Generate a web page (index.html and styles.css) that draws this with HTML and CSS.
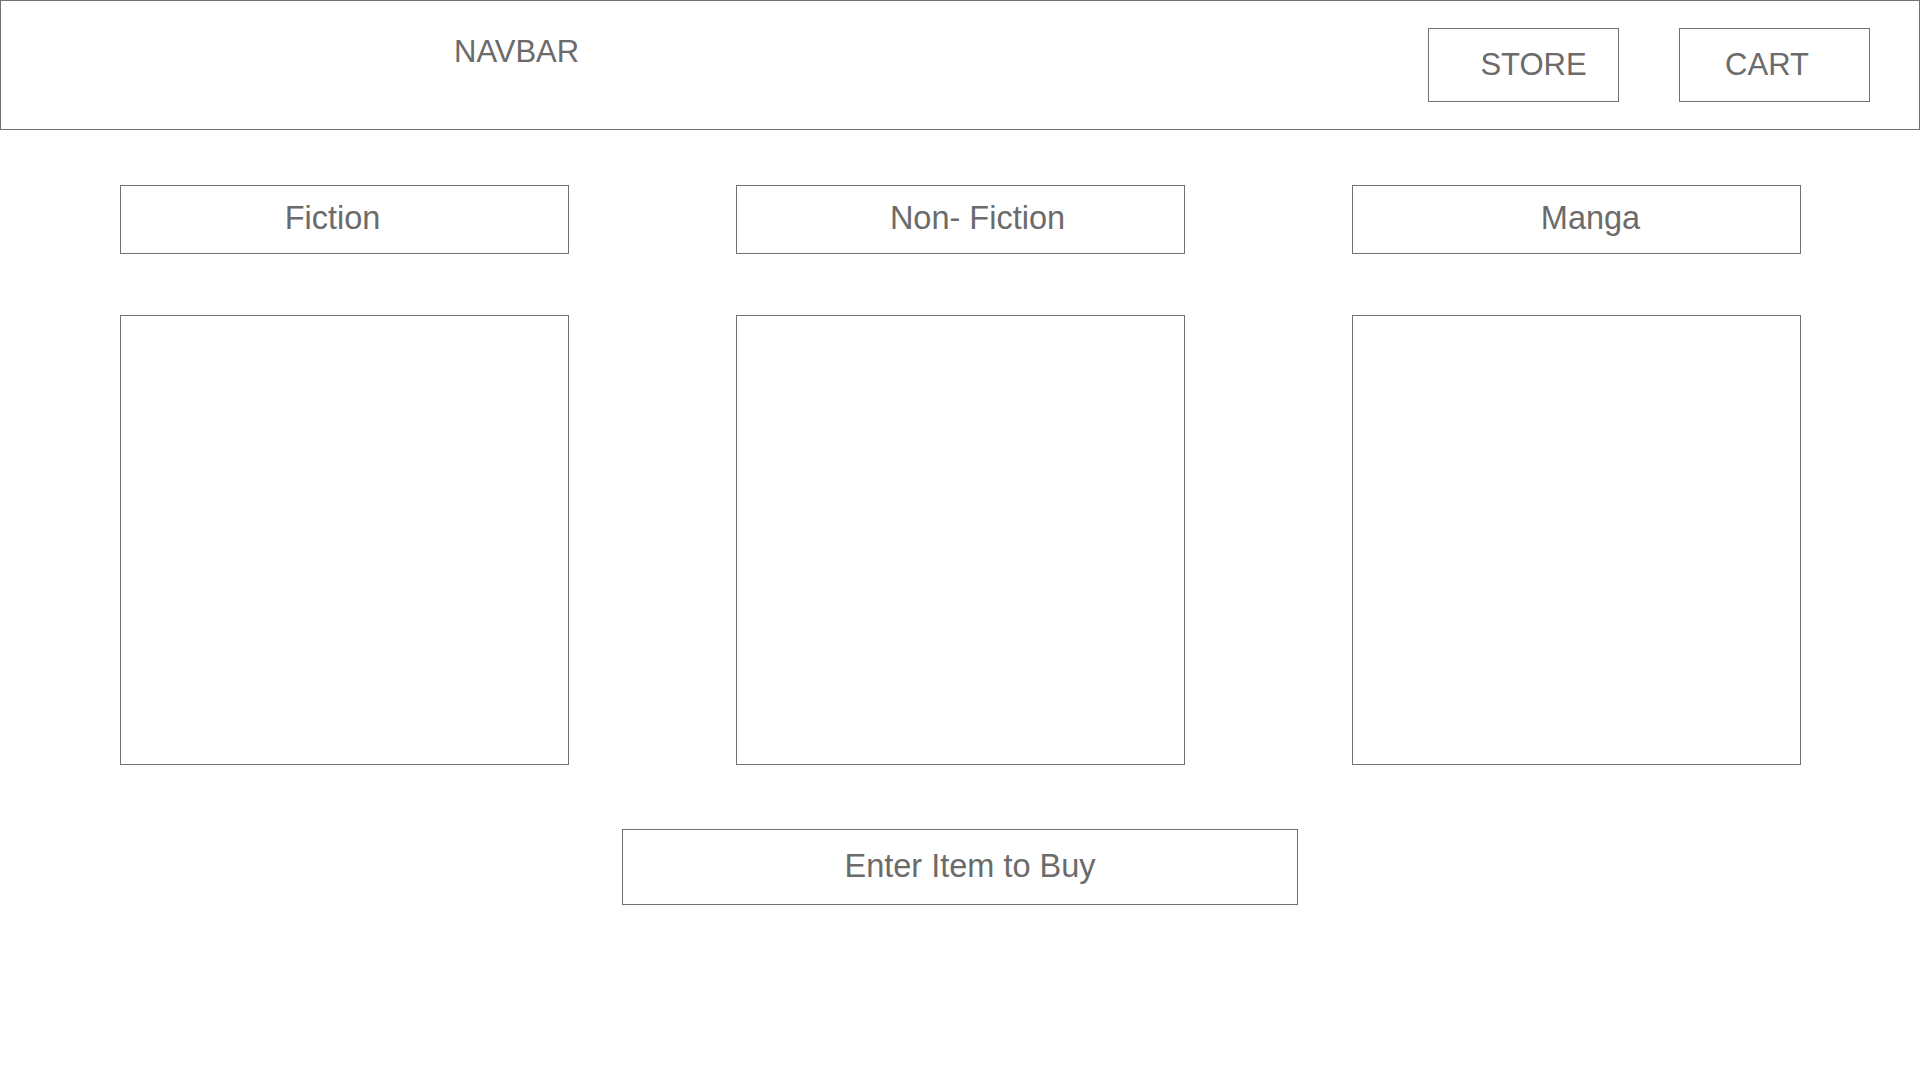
FILE: index.html
```html
<!DOCTYPE html>
<html lang="en">
<head>
<meta charset="utf-8">
<title>Bookstore wireframe</title>
<link rel="stylesheet" href="styles.css">
</head>
<body>
  <header class="navbar">
    <div class="brand">NAVBAR</div>
    <a class="nav-btn nav-store"><span>STORE</span></a>
    <a class="nav-btn nav-cart"><span>CART</span></a>
  </header>
  <main class="content">
    <section class="grid">
      <div class="cat cat-fiction"><span>Fiction</span></div>
      <div class="cat cat-nonfiction"><span>Non- Fiction</span></div>
      <div class="cat cat-manga"><span>Manga</span></div>
      <div class="panel"></div>
      <div class="panel"></div>
      <div class="panel"></div>
    </section>
    <div class="buy-row">
      <div class="buy-box"><span>Enter Item to Buy</span></div>
    </div>
  </main>
</body>
</html>
```
FILE: styles.css
```css
* { box-sizing: border-box; }

html, body {
  margin: 0;
  padding: 0;
  background: #ffffff;
}

body {
  font-family: "Liberation Sans", Arial, Helvetica, sans-serif;
  color: #6b6b6b;
  width: 1920px;
  height: 1080px;
  overflow: hidden;
}

.navbar {
  display: flex;
  align-items: flex-start;
  height: 130px;
  border: 1px solid #717171;
  padding: 27px 49px 0 453px;
}

.brand {
  font-size: 31px;
  line-height: 34px;
  margin-top: 7px;
}

.nav-btn {
  display: flex;
  align-items: center;
  justify-content: center;
  width: 191px;
  height: 74px;
  border: 1px solid #717171;
  font-size: 31px;
  line-height: 34px;
  padding-bottom: 1px;
}

.nav-store {
  margin-left: auto;
  padding-left: 20px;
}

.nav-cart {
  margin-left: 60px;
  padding-right: 15px;
}

.content {
  padding: 55px 119px 0 120px;
}

.grid {
  display: grid;
  grid-template-columns: repeat(3, 449px);
  grid-template-rows: 69px 450px;
  column-gap: 167px;
  row-gap: 61px;
}

.cat {
  display: flex;
  align-items: center;
  justify-content: center;
  border: 1px solid #717171;
  font-size: 32.5px;
  line-height: 36px;
  padding-bottom: 3px;
}

.cat-fiction { padding-right: 24px; }
.cat-nonfiction { padding-left: 34px; }
.cat-manga { padding-left: 28px; }

.panel {
  border: 1px solid #717171;
}

.buy-row {
  display: flex;
  justify-content: center;
  margin-top: 64px;
  margin-left: -120px;
  margin-right: -119px;
}

.buy-box {
  display: flex;
  align-items: center;
  justify-content: center;
  width: 676px;
  height: 76px;
  border: 1px solid #717171;
  font-size: 32.5px;
  line-height: 36px;
  padding-left: 20px;
  padding-bottom: 2px;
}
```
